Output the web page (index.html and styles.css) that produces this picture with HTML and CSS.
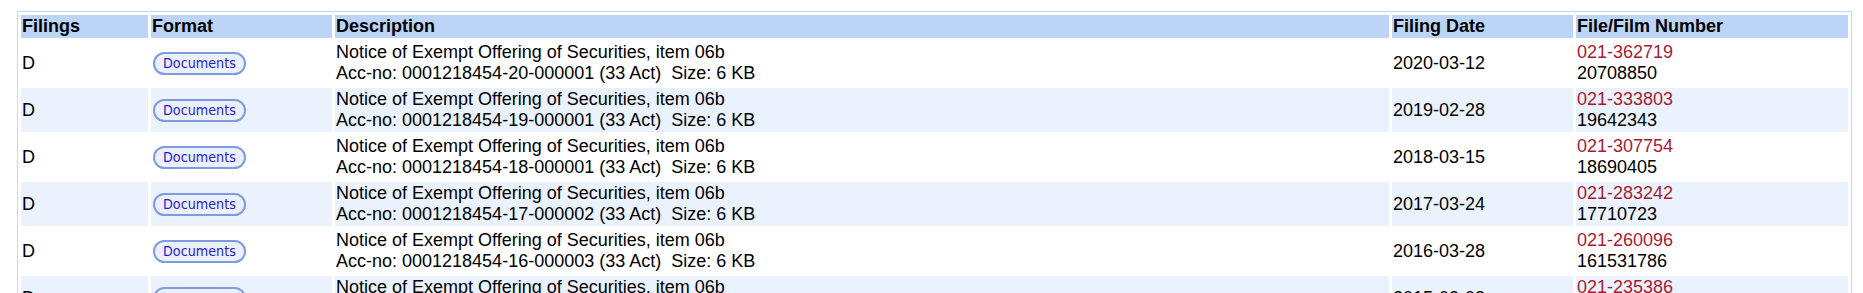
FILE: index.html
```html
<!DOCTYPE html>
<html lang="en">
<head>
<meta charset="utf-8">
<title>Filings</title>
<link rel="stylesheet" href="styles.css">
</head>
<body>
<table class="filings" summary="Results">
  <colgroup>
    <col class="c-type">
    <col class="c-format">
    <col class="c-desc">
    <col class="c-date">
    <col class="c-file">
  </colgroup>
  <thead>
    <tr>
      <th>Filings</th>
      <th>Format</th>
      <th>Description</th>
      <th>Filing Date</th>
      <th>File/Film Number</th>
    </tr>
  </thead>
  <tbody>
    <tr>
      <td>D</td>
      <td><a class="docbtn" href="#">Documents</a></td>
      <td class="desc">Notice of Exempt Offering of Securities, item 06b<br>Acc-no: 0001218454-20-000001 (33 Act)&nbsp; Size: 6 KB</td>
      <td>2020-03-12</td>
      <td><a class="fileno" href="#">021-362719</a><br>20708850</td>
    </tr>
    <tr class="blue">
      <td>D</td>
      <td><a class="docbtn" href="#">Documents</a></td>
      <td class="desc">Notice of Exempt Offering of Securities, item 06b<br>Acc-no: 0001218454-19-000001 (33 Act)&nbsp; Size: 6 KB</td>
      <td>2019-02-28</td>
      <td><a class="fileno" href="#">021-333803</a><br>19642343</td>
    </tr>
    <tr>
      <td>D</td>
      <td><a class="docbtn" href="#">Documents</a></td>
      <td class="desc">Notice of Exempt Offering of Securities, item 06b<br>Acc-no: 0001218454-18-000001 (33 Act)&nbsp; Size: 6 KB</td>
      <td>2018-03-15</td>
      <td><a class="fileno" href="#">021-307754</a><br>18690405</td>
    </tr>
    <tr class="blue">
      <td>D</td>
      <td><a class="docbtn" href="#">Documents</a></td>
      <td class="desc">Notice of Exempt Offering of Securities, item 06b<br>Acc-no: 0001218454-17-000002 (33 Act)&nbsp; Size: 6 KB</td>
      <td>2017-03-24</td>
      <td><a class="fileno" href="#">021-283242</a><br>17710723</td>
    </tr>
    <tr>
      <td>D</td>
      <td><a class="docbtn" href="#">Documents</a></td>
      <td class="desc">Notice of Exempt Offering of Securities, item 06b<br>Acc-no: 0001218454-16-000003 (33 Act)&nbsp; Size: 6 KB</td>
      <td>2016-03-28</td>
      <td><a class="fileno" href="#">021-260096</a><br>161531786</td>
    </tr>
    <tr class="blue">
      <td>D</td>
      <td><a class="docbtn" href="#">Documents</a></td>
      <td class="desc">Notice of Exempt Offering of Securities, item 06b<br>Acc-no: 0001218454-15-000002 (33 Act)&nbsp; Size: 6 KB</td>
      <td>2015-03-03</td>
      <td><a class="fileno" href="#">021-235386</a><br>15671880</td>
    </tr>
  </tbody>
</table>
</body>
</html>
```

FILE: styles.css
```css
html, body {
  margin: 0;
  padding: 0;
  background: #ffffff;
}

body {
  padding: 11px 0 0 17px;
  font-family: "Liberation Sans", Arial, sans-serif;
  font-size: 18px;
  line-height: 21px;
  color: #000000;
}

.filings {
  width: 1835px;
  table-layout: fixed;
  border-collapse: separate;
  border-spacing: 3px;
  border: 1px solid #c4d9f6;
}

.c-type { width: 127px; }
.c-format { width: 181px; }
.c-desc { width: 1054px; }
.c-date { width: 181px; }
.c-file { width: 272px; }

.filings th {
  background: #bcd5f6;
  text-align: left;
  font-weight: bold;
  padding: 1px 1px;
}

.filings td {
  padding: 1px 1px;
  vertical-align: middle;
  white-space: nowrap;
}

.filings tr.blue td {
  background: #eaf2fd;
}

.docbtn {
  display: inline-block;
  margin-left: 1px;
  padding: 0 8px;
  border: 2px solid #7f9ade;
  border-radius: 12px;
  background: #eaf0fe;
  color: #2a1fc6;
  font-family: "DejaVu Sans Condensed", "DejaVu Sans", Verdana, sans-serif;
  font-stretch: condensed;
  font-size: 14.2px;
  line-height: 19px;
  text-decoration: none;
  vertical-align: middle;
}

.fileno {
  color: #a81a34;
  text-decoration: none;
}
```
